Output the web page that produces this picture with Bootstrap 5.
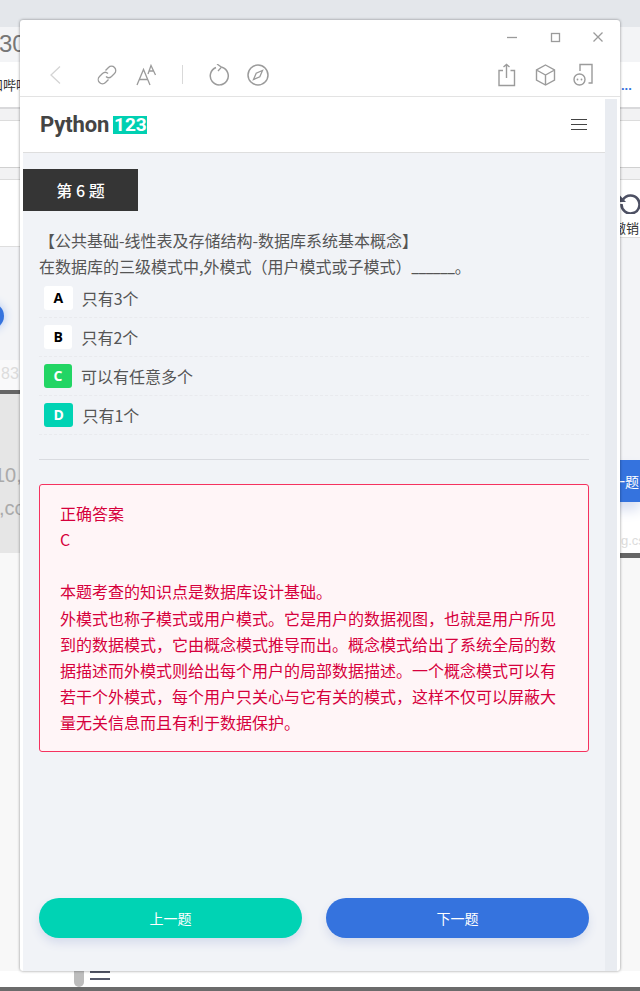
<!DOCTYPE html>
<html lang="zh-CN">
<head>
<meta charset="utf-8">
<title>Python123</title>
<link rel="stylesheet" href="https://cdn.jsdelivr.net/npm/bootstrap@5.3.0/dist/css/bootstrap.min.css">
<style>
html,body{margin:0;height:991px;overflow:hidden;background:#fff;font-family:"Noto Sans CJK SC","Open Sans",sans-serif}
.desk{position:relative;width:640px;height:991px;overflow:hidden;background:#fff}
.bp{position:absolute}
.b-top{left:0;top:0;width:640px;height:27px;background:#e4e7eb}
.b-tab{left:0;top:27px;width:640px;height:35px;background:#f3f4f6}
.b-line1{left:0;top:107px;width:640px;height:14px;background:#f2f2f3;border-top:2px solid #d9d9db;border-bottom:1px solid #dcdcdc}
.b-line2{left:0;top:167px;width:640px;height:13px;background:#f2f2f3;border-top:1px solid #d0d0d0;border-bottom:1px solid #dcdcdc}
.b-pane-r{left:600px;top:237px;width:40px;height:223px;background:#f3f4f7;border-top:1px solid #dedede}
.b-pane-l{left:0;top:246px;width:20px;height:144px;background:#f3f4f7;border-top:1px solid #dedede}
.b-fade{left:0;top:360px;width:20px;height:30px;background:#f9f9fa}
.b-bar{left:0;top:390px;width:20px;height:4px;background:#666}
.b-grey{left:0;top:394px;width:20px;height:159px;background:#e6e6e6}
.b-barr{left:600px;top:553px;width:40px;height:5px;background:#666}
.b-low-l{left:0;top:553px;width:20px;height:418px;background:#f8f8f8}
.b-low-r{left:620px;top:558px;width:20px;height:413px;background:#f8f8f8}
.b-foot{left:0;top:987px;width:640px;height:4px;background:#6b6b6b}
.b-circle{left:-22px;top:303px;width:26px;height:26px;border-radius:50%;background:#3573de;box-shadow:0 0 10px #a9c3f2}
.b-blue{left:600px;top:460px;width:40px;height:42px;background:#3573de;box-shadow:0 8px 12px #d8def0;color:#fff;font-size:14px;line-height:42px;padding-left:11px;white-space:nowrap;overflow:hidden}
.b-30{left:-1px;top:30px;font:24px/28px "Liberation Sans",sans-serif;color:#777}
.b-bili{left:-10px;top:76px;font-size:13px;line-height:18px;color:#333;white-space:nowrap}
.b-dots{left:621px;top:78px;font:bold 13px/16px "Liberation Sans",sans-serif;color:#3573de}
.b-83{left:1px;top:364px;font:16px/20px "Liberation Sans",sans-serif;color:#dcdcdc}
.b-10{left:-6px;top:463px;font:20px/24px "Liberation Sans",sans-serif;color:#aaa}
.b-co{left:-1px;top:496px;font:20px/24px "Liberation Sans",sans-serif;color:#aaa}
.b-undo{left:619px;top:192px}
.b-cx{left:613px;top:219px;font-size:13px;line-height:18px;color:#333;white-space:nowrap}
.b-gcs{left:621px;top:533px;font:13px/16px "Liberation Sans",sans-serif;color:#dcdcdc}
.b-thumb{left:74px;top:965px;width:10px;height:22px;background:#bdbdbd;border-radius:0 0 5px 5px}
.b-ham{left:90px;top:971px;width:20px;height:9px;border-top:2px solid #55596a;border-bottom:2px solid #55596a}

.win{position:absolute;left:20px;top:20px;width:600px;height:951px;background:#fff;border-radius:3px;box-shadow:0 0 3px rgba(0,0,0,.45)}
.win-ctl{height:33px;padding:0 16px 0 0;gap:31px}
.win-tools{height:44px;padding:0 27px 0 28px;border-bottom:1px solid #e3e3e3}
.tool-sep{width:1px;height:19px;background:#d9d9d9;margin:0 26px 0 25px}
.t-icon{display:block;fill:none;stroke:#9b9b9b;stroke-width:1.3}
.t-link{margin-left:32px;margin-right:18px}
.t-refresh{margin-right:17px}
.t-share{margin-right:19px}
.t-cube{margin-right:17px}
.win-body{height:874px;padding:2px 3px 0 3px}
.page{width:582px;height:872px;background:#f1f3f7}
.sbar{width:12px;height:872px;background:#e9ecf1}
.top-nav{height:56px;margin-top:-2px;background:#fff;border-bottom:1px solid #dedede;padding:0 18px 0 17px}
.logo-txt{font:700 22px/28px "Roboto",sans-serif;color:#444;letter-spacing:-.1px}
.logo-num{margin-left:4px;background:#00d0b2;color:#fff;font:700 19px/18px "Roboto",sans-serif;height:18px;width:34px;text-align:center}
.burger{width:16px;height:11px;border-top:1px solid #444;border-bottom:1px solid #444;position:relative}
.burger::after{content:"";position:absolute;left:0;right:0;top:4px;height:1px;background:#444}
.q-no{width:115px;height:42px;margin-top:16px;background:#353535;color:#fff;font-size:16px;line-height:42px;text-align:center;font-weight:500;flex-shrink:0}
.q-wrap{padding:0 16px;color:#555;font-size:16px;line-height:26px}
.q-text{margin-top:16px}
.blank{font-family:"Roboto",sans-serif;line-height:0}
.opt-row{height:39px;padding-left:5px;border-bottom:1px dashed #e9eaee;gap:9px;color:#555}
.opt-key{height:24px;padding:0 9.5px;background:#fff;border-radius:3px;color:#000;font:700 14px/24px "Open Sans",sans-serif}
.k-c{background:#22d564;color:#fff}
.k-d{background:#00d3b4;color:#fff}
.q-hr{height:1px;background:#d9dbe0;margin:24px 0}
.ans{background:#fff5f7;border:1px solid #f5325f;border-radius:3px;color:#d6003c;font-size:16px;line-height:26.2px;padding:15px 20px 0;height:268px}
.ans-gap{height:26px}
.btn-row{margin-top:auto;gap:24px;padding:0 16px 33px}
.act{flex:1;height:40px;border:0;border-radius:20px;color:#fff;font-size:14px;box-shadow:0 5px 10px #d6dcec}
.act:hover{color:#fff}
.act-g{background:#00d3b4}
.act-b{background:#3573de}
</style>
</head>
<body>
<div class="desk">
  <div class="bp b-top"></div>
  <div class="bp b-tab"></div>
  <div class="bp b-line1"></div>
  <div class="bp b-line2"></div>
  <div class="bp b-pane-r"></div>
  <div class="bp b-pane-l"></div>
  <div class="bp b-fade"></div>
  <div class="bp b-circle"></div>
  <div class="bp b-bar"></div>
  <div class="bp b-grey"></div>
  <div class="bp b-low-l"></div>
  <div class="bp b-low-r"></div>
  <div class="bp b-barr"></div>
  <div class="bp b-foot"></div>
  <div class="bp b-blue">一题</div>
  <div class="bp b-30">30</div>
  <div class="bp b-bili">和哔哩</div>
  <div class="bp b-dots">...</div>
  <div class="bp b-83">83</div>
  <div class="bp b-10">10,</div>
  <div class="bp b-co">,co</div>
  <svg class="bp b-undo" width="22" height="22" viewBox="0 0 22 22" fill="none"><path d="M4 7.500A9 9 0 1 1 2.500 12" stroke="#4d5063" stroke-width="2.600"/><path d="M1 3.500 1 10 7 10Z" fill="#4d5063"/></svg>
  <div class="bp b-cx">撤销</div>
  <div class="bp b-gcs">g.cs</div>
  <div class="bp b-thumb"></div>
  <div class="bp b-ham"></div>

  <div class="win d-flex flex-column">
    <div class="win-ctl d-flex justify-content-end align-items-center">
      <svg class="t-icon" width="12" height="12" viewBox="0 0 12 12"><path d="M1 6.500H11"/></svg>
      <svg class="t-icon" width="12" height="12" viewBox="0 0 12 12"><rect x="2.500" y="2.500" width="8" height="8"/></svg>
      <svg class="t-icon" width="12" height="12" viewBox="0 0 12 12"><path d="M1.500 1.500 10.500 10.500M10.500 1.500 1.500 10.500"/></svg>
    </div>
    <div class="win-tools d-flex align-items-center justify-content-between">
      <div class="d-flex align-items-center">
        <svg class="t-icon" width="16" height="20" viewBox="0 0 16 20"><path d="M12 1.500 3 10l9 8.500" stroke="#d4d4d4"/></svg>
        <svg class="t-icon t-link" width="22" height="22" viewBox="0 0 22 22"><path d="M9.500 6.500 12.500 3.500a4 4 0 0 1 6 6l-3 3a4 4 0 0 1-5.500 0"/><path d="M12.500 15.500 9.500 18.500a4 4 0 0 1-6-6l3-3a4 4 0 0 1 5.500 0"/></svg>
        <svg class="t-icon" width="21" height="22" viewBox="0 0 21 22"><path d="M1 21 7.500 5.500 14 21M3.500 15.500H11.500"/><path d="M12 10 15 1.500 19.500 11M13.500 7H18"/></svg>
        <div class="tool-sep"></div>
        <svg class="t-icon t-refresh" width="21" height="22" viewBox="0 0 21 22"><path d="M13 3.300A9 9 0 1 1 7 3.500" stroke-width="1.500"/><path d="M8 0 12.500 3.200 9 7" stroke-width="1.300"/></svg>
        <svg class="t-icon" width="22" height="22" viewBox="0 0 22 22"><circle cx="11" cy="11" r="10" stroke-width="1.500"/><path d="M15.500 6.500 12.800 12.800 6.500 15.500 9.200 9.200Z"/></svg>
      </div>
      <div class="d-flex align-items-center">
        <svg class="t-icon t-share" width="19" height="24" viewBox="0 0 19 24"><path d="M6 7.500H2V22.500H17.500V7.500H13.500M9.500 15V1.500M6.500 4 9.500 1.500 12.500 4" stroke-width="1.400"/></svg>
        <svg class="t-icon t-cube" width="21" height="22" viewBox="0 0 21 22"><path d="M10.500 1 19.500 6V16L10.500 21 1.500 16V6ZM1.500 6 10.500 11 19.500 6M10.500 11V21" stroke-width="1.400"/></svg>
        <svg class="t-icon" width="20" height="23" viewBox="0 0 20 23"><path d="M7 8V1.500H19V20H15.500" stroke-width="1.400"/><circle cx="6.500" cy="16.500" r="5.500" stroke-width="1.400"/><circle cx="4.500" cy="16.500" r=".9" fill="#9b9b9b" stroke="none"/><circle cx="8.500" cy="16.500" r=".9" fill="#9b9b9b" stroke="none"/></svg>
      </div>
    </div>
    <div class="win-body d-flex">
      <div class="page d-flex flex-column">
        <nav class="top-nav d-flex align-items-center justify-content-between flex-shrink-0">
          <div class="d-flex align-items-center">
            <span class="logo-txt">Python</span><span class="logo-num">123</span>
          </div>
          <div class="burger"></div>
        </nav>
        <div class="q-no">第 6 题</div>
        <div class="q-wrap q-text">
          <div>【公共基础-线性表及存储结构-数据库系统基本概念】</div>
          <div>在数据库的三级模式中,外模式（用户模式或子模式）<span class="blank">______</span>。</div>
        </div>
        <div class="q-wrap">
          <div class="opt-row d-flex align-items-center"><span class="opt-key">A</span><span>只有3个</span></div>
          <div class="opt-row d-flex align-items-center"><span class="opt-key">B</span><span>只有2个</span></div>
          <div class="opt-row d-flex align-items-center"><span class="opt-key k-c">C</span><span>可以有任意多个</span></div>
          <div class="opt-row d-flex align-items-center"><span class="opt-key k-d">D</span><span>只有1个</span></div>
          <div class="q-hr"></div>
          <div class="ans">
            <div>正确答案</div>
            <div>C</div>
            <div class="ans-gap"></div>
            <div>本题考查的知识点是数据库设计基础。</div>
            <div>外模式也称子模式或用户模式。它是用户的数据视图，也就是用户所见到的数据模式，它由概念模式推导而出。概念模式给出了系统全局的数据描述而外模式则给出每个用户的局部数据描述。一个概念模式可以有若干个外模式，每个用户只关心与它有关的模式，这样不仅可以屏蔽大量无关信息而且有利于数据保护。</div>
          </div>
        </div>
        <div class="btn-row d-flex">
          <button class="btn act act-g" type="button">上一题</button>
          <button class="btn act act-b" type="button">下一题</button>
        </div>
      </div>
      <div class="sbar"></div>
    </div>
  </div>
</div>
<script src="https://cdn.jsdelivr.net/npm/bootstrap@5.3.0/dist/js/bootstrap.bundle.min.js"></script>
</body>
</html>
